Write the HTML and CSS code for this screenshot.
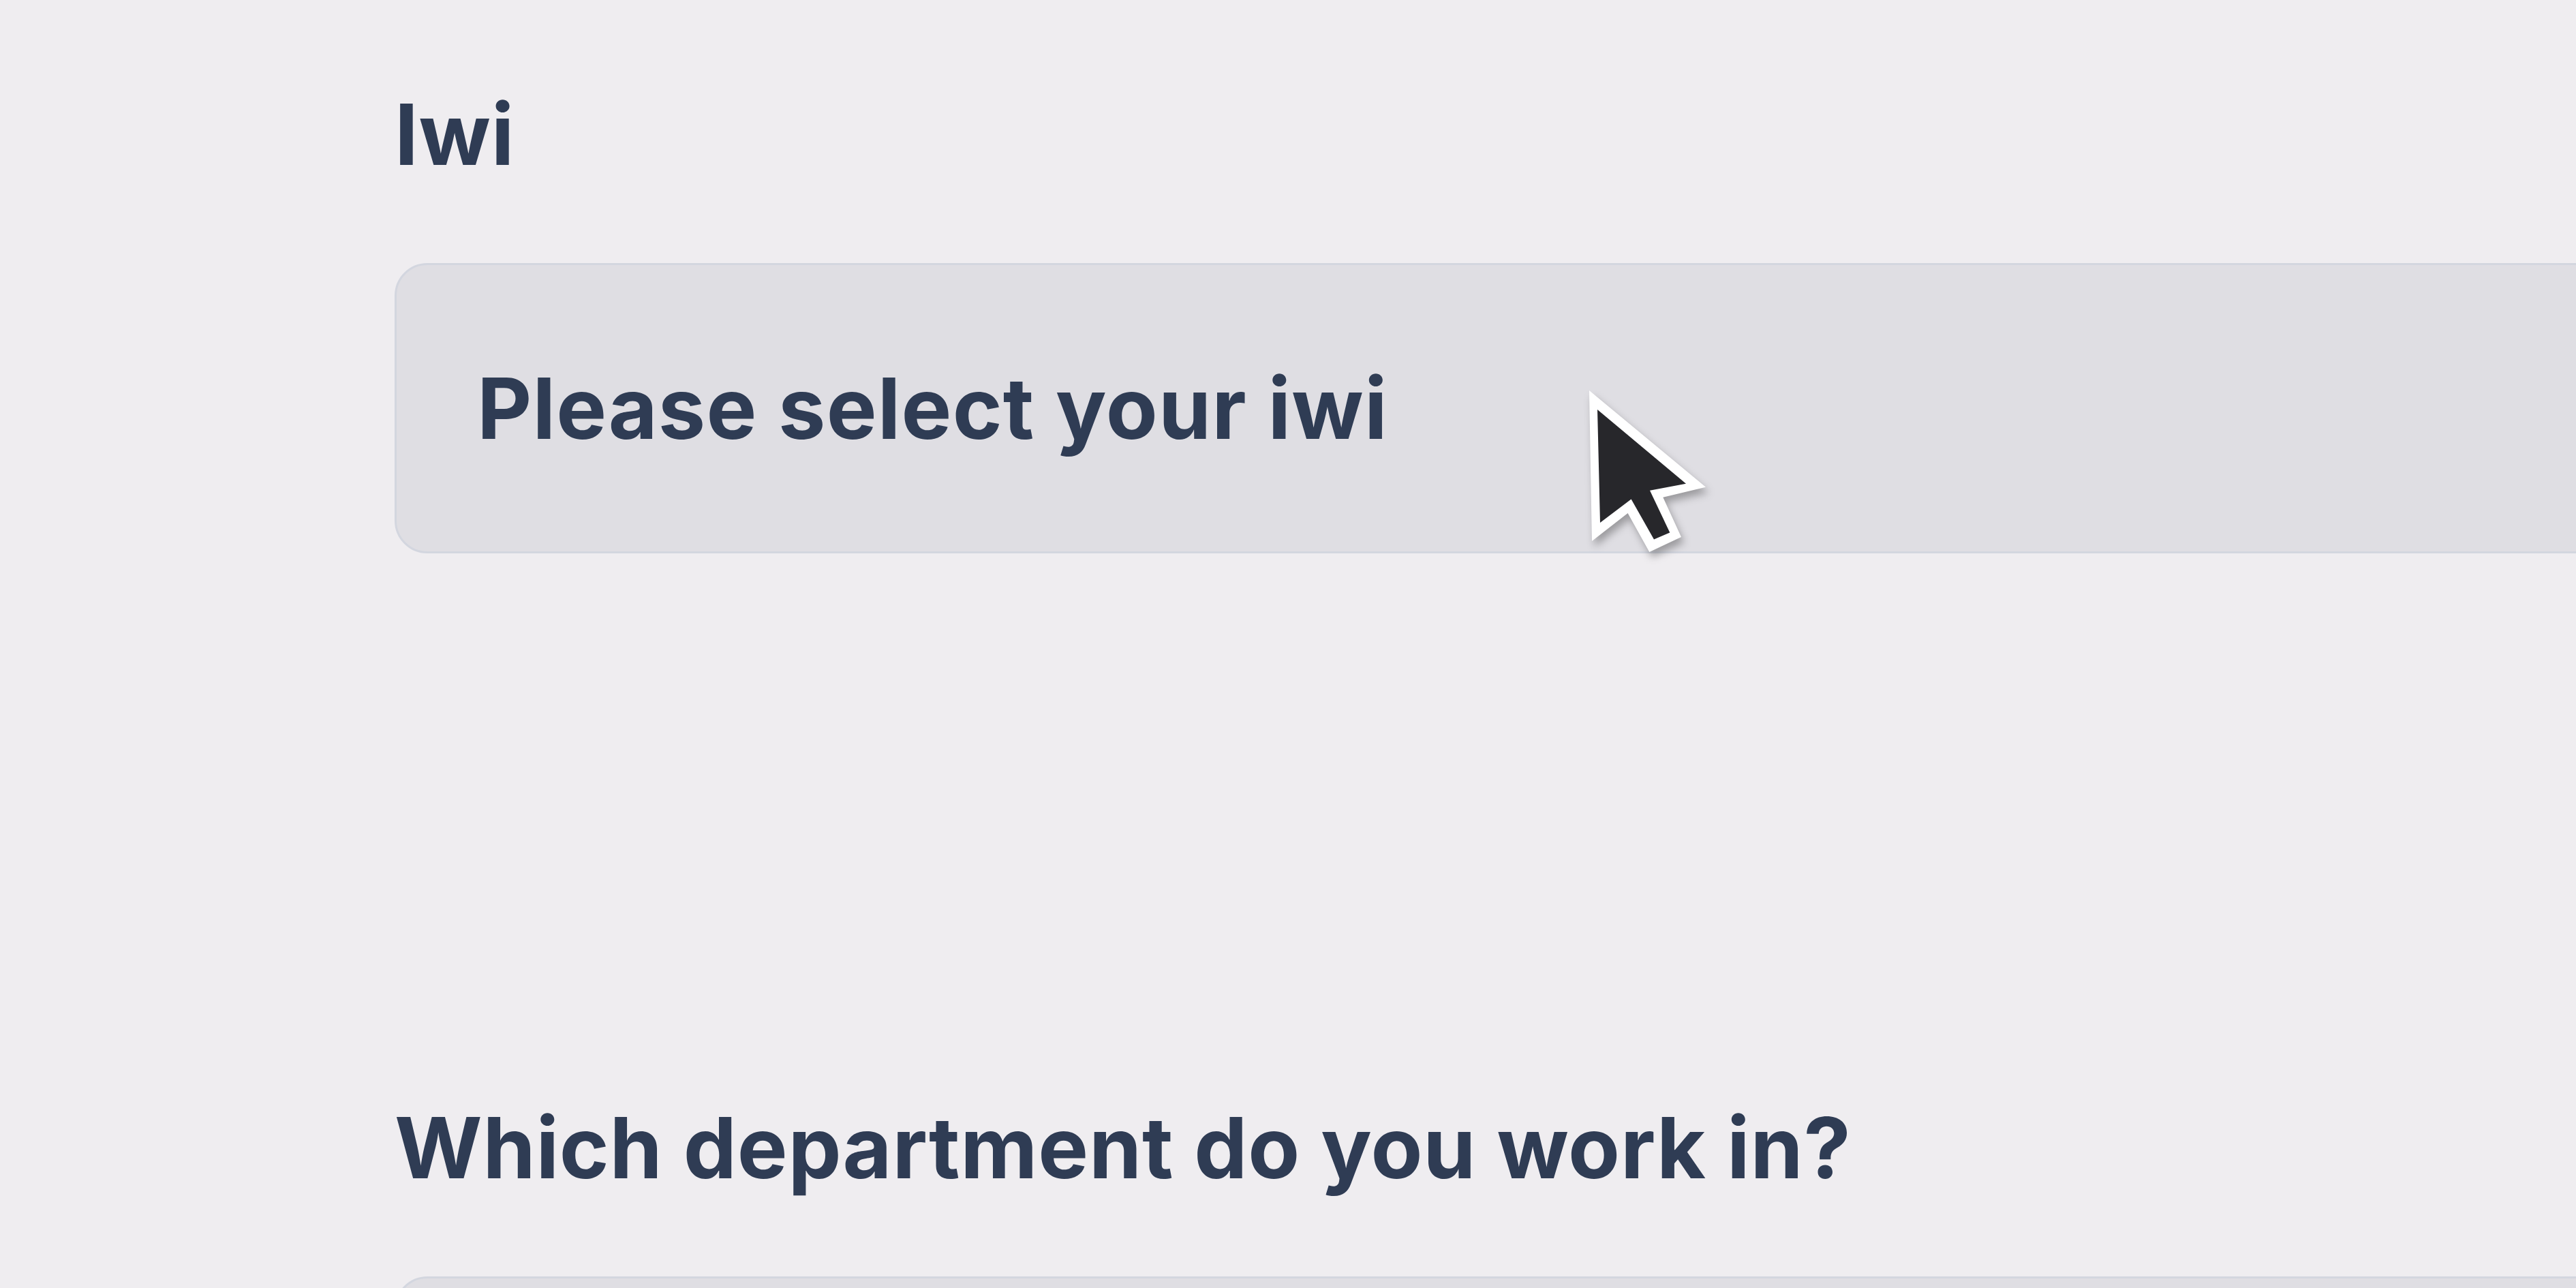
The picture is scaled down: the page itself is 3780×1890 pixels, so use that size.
FILE: index.html
```html
<!DOCTYPE html>
<html>
<head>
    <title>Profile details</title>
    <link rel="stylesheet" href="styles.css">
</head>
<body>
    <form class="profile-form">
        <div class="field">
            <label class="field-label" for="iwi">Iwi</label>
            <div class="select-box" id="iwi">
                <span class="placeholder">Please select your iwi</span>
            </div>
        </div>
        <div class="field">
            <label class="field-label" for="department">Which department do you work in?</label>
            <div class="select-box" id="department">
                <span class="placeholder"></span>
            </div>
        </div>
    </form>

    <svg class="pointer" width="180" height="250" viewBox="0 0 180 250">
        <polygon fill="#ffffff" points="0,0 4,221 56.6,180 88.3,237 135,215 108.3,156.7 171,141.7"/>
        <polygon fill="#27272b" points="12,28 16,194 61.6,159.4 95,218.4 118.3,208.4 89,146.7 142,136.7"/>
    </svg>
</body>
</html>
```

FILE: styles.css
```css
body {
    background-color: #efedf0;
    font-family: Inter, 'Noto Sans', sans-serif;
    color: #2f3c54;
    margin: 0;
    padding: 122px 0 0 579px;
    overflow: hidden;
    height: 1890px;
    box-sizing: border-box;
}

.profile-form {
    display: flex;
    flex-direction: column;
    gap: 797px;
}

.field {
    display: flex;
    flex-direction: column;
    gap: 114px;
}

.field-label {
    display: block;
    font-size: 124px;
    font-weight: 700;
    line-height: 150px;
    letter-spacing: 0.8px;
}

.select-box {
    width: 3600px;
    height: 426px;
    box-sizing: border-box;
    background-color: #dfdee3;
    border: 3px solid #d3d6df;
    border-radius: 48px;
    padding-left: 118px;
    display: flex;
    align-items: center;
}

.placeholder {
    font-size: 124px;
    font-weight: 700;
    line-height: 150px;
    letter-spacing: 1.2px;
}

.pointer {
    position: absolute;
    left: 2332px;
    top: 573px;
    filter: drop-shadow(4px 8px 6px rgba(0, 0, 0, 0.3));
}
```
